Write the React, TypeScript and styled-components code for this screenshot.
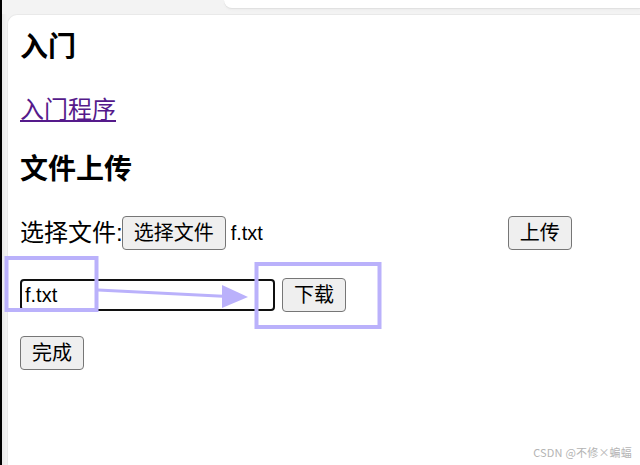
import React from "react";
import styled, { createGlobalStyle } from "styled-components";

const GlobalStyle = createGlobalStyle`
  html, body {
    margin: 0;
    padding: 0;
    background: #f3f3f3;
  }
  body {
    font-family: "Liberation Sans", "Noto Sans CJK SC", sans-serif;
    color: #000;
  }
`;

const Page = styled.div`
  position: relative;
  display: flex;
  flex-direction: column;
  height: 465px;
  overflow: hidden;
  border-left: 2px solid #000;
  background: linear-gradient(90deg, #e9e9e9 0, #f3f3f3 5px);
`;

const TopStrip = styled.div`
  display: flex;
  justify-content: flex-end;
  height: 14px;
  flex-shrink: 0;
  background: #f3f3f3;
`;

const TopTab = styled.div`
  width: 416px;
  height: 8px;
  background: #fff;
  border-bottom-left-radius: 14px;
  box-shadow: 0 1px 0 #e1e1e1, 0 2px 2px #ececec;
`;

const Card = styled.main`
  flex: 1;
  margin-left: 5px;
  padding: 15px 0 0 12px;
  background: #fff;
  border: 1px solid #e9e9e9;
  border-right: 0;
  border-bottom: 0;
  border-top-left-radius: 10px;
  display: flex;
  flex-direction: column;
  align-items: flex-start;
`;

const Heading = styled.h3<{ $top?: number }>`
  margin: ${(p) => p.$top ?? 0}px 0 0;
  font-size: 28px;
  font-weight: 700;
  line-height: 36px;
`;

const Para = styled.p`
  margin: 27px 0 0;
  font-size: 24px;
  line-height: 34px;
`;

const Link = styled.a`
  color: #551a8b;
  text-decoration: underline;
  text-underline-offset: 2px;
`;

const Row = styled.div<{ $top: number }>`
  display: flex;
  align-items: center;
  margin-top: ${(p) => p.$top}px;
  height: 34px;
`;

const FieldLabel = styled.span`
  font-size: 24px;
  line-height: 34px;
  margin-right: -1px;
`;

const FilePicker = styled.div`
  display: flex;
  align-items: center;
  width: 382px;
`;

const FileName = styled.span`
  margin-left: 5px;
  font-size: 20px;
`;

const Button = styled.button<{ $gap?: number }>`
  box-sizing: border-box;
  height: 34px;
  margin: 0 0 0 ${(p) => p.$gap ?? 0}px;
  padding: 0 11px;
  font-family: "Liberation Sans", "Noto Sans CJK SC", sans-serif;
  font-size: 20px;
  line-height: 1;
  color: #000;
  background: #efefef;
  border: 1px solid #767676;
  border-radius: 4px;
`;

const NameInput = styled.input`
  box-sizing: border-box;
  width: 255px;
  height: 32px;
  padding: 0 3px;
  font-family: "Liberation Sans", "Noto Sans CJK SC", sans-serif;
  font-size: 20px;
  color: #000;
  border: 2px solid #101010;
  border-radius: 4px;
  outline: none;
`;

const Watermark = styled.span`
  position: absolute;
  right: 8px;
  bottom: 5px;
  font-family: "Noto Sans CJK SC", "Liberation Sans", sans-serif;
  font-size: 11px;
  color: #b4b4b4;
  letter-spacing: 0.2px;
`;

const Overlay = styled.svg`
  position: absolute;
  left: -2px;
  top: 0;
  pointer-events: none;
`;

const mark = "#bab1fb";

export default function App() {
  return (
    <>
      <GlobalStyle />
      <Page>
        <TopStrip>
          <TopTab />
        </TopStrip>
        <Card>
          <Heading>入门</Heading>
          <Para>
            <Link href="#">入门程序</Link>
          </Para>
          <Heading $top={25}>文件上传</Heading>
          <Row $top={28}>
            <FieldLabel>选择文件:</FieldLabel>
            <FilePicker>
              <Button type="button">选择文件</Button>
              <FileName>f.txt</FileName>
            </FilePicker>
            <Button type="button" $gap={4}>上传</Button>
          </Row>
          <Row $top={28}>
            <NameInput defaultValue="f.txt" />
            <Button type="button" $gap={7}>下载</Button>
          </Row>
          <Row $top={24}>
            <Button type="button">完成</Button>
          </Row>
        </Card>
        <Overlay width="640" height="465" viewBox="0 0 640 465">
          <rect x="6.5" y="258" width="90" height="52" fill="none" stroke={mark} strokeWidth="4" />
          <rect x="256.5" y="264" width="123" height="63" fill="none" stroke={mark} strokeWidth="4" />
          <line x1="98" y1="290" x2="228" y2="296.5" stroke={mark} strokeWidth="3" />
          <polygon points="222,285 248,297 222,308" fill={mark} />
        </Overlay>
        <Watermark>CSDN @不修×蝙蝠</Watermark>
      </Page>
    </>
  );
}
